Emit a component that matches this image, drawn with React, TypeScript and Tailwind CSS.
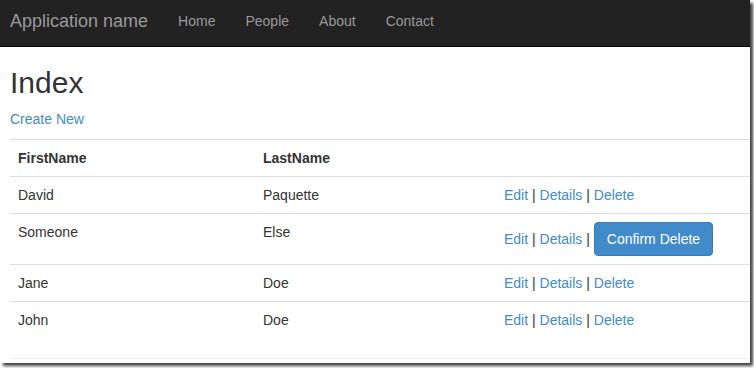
import React from "react";

const rows = [
  { first: "David", last: "Paquette", confirm: false },
  { first: "Someone", last: "Else", confirm: true },
  { first: "Jane", last: "Doe", confirm: false },
  { first: "John", last: "Doe", confirm: false },
];

function Actions({ confirm }: { confirm: boolean }) {
  return (
    <span>
      <a className="text-[#428bca]">Edit</a> | <a className="text-[#428bca]">Details</a> |{" "}
      {confirm ? (
        <button className="inline-block rounded-[4px] border border-[#357ebd] bg-[#428bca] px-[12px] py-[6px] text-[14px] leading-[20px] text-white">
          Confirm Delete
        </button>
      ) : (
        <a className="text-[#428bca]">Delete</a>
      )}
    </span>
  );
}

export default function App() {
  return (
    <div
      className="relative h-[368px] w-[754px] overflow-hidden bg-white text-[14px] leading-[20px] text-[#333]"
      style={{ fontFamily: '"Liberation Sans", Arial, sans-serif' }}
    >
      <div className="h-[363px] w-[750px] overflow-hidden bg-white shadow-[3px_3px_3px_rgba(0,0,0,0.75)]">
        <nav className="flex h-[47px] items-start border-b border-[#080808] bg-[#222]">
          <span className="pl-[10px] pr-[15px] pt-[11px] text-[18px] leading-[20px] text-[#999]">
            Application name
          </span>
          <ul className="flex pt-[11px] text-[14px] leading-[20px] text-[#999]">
            <li className="px-[15px]">Home</li>
            <li className="px-[15px]">People</li>
            <li className="px-[15px]">About</li>
            <li className="px-[15px]">Contact</li>
          </ul>
        </nav>
        <div className="pl-[10px]">
          <h2 className="mt-[19px] mb-[10px] text-[30px] font-normal leading-[33px]">Index</h2>
          <p className="mb-[10px]">
            <a className="text-[#428bca]">Create New</a>
          </p>
          <table className="w-[740px] border-collapse">
            <tbody>
              <tr className="border-t border-[#ddd]">
                <th className="w-[245px] p-[8px] text-left font-bold">FirstName</th>
                <th className="w-[241px] p-[8px] text-left font-bold">LastName</th>
                <th className="p-[8px]"></th>
              </tr>
              {rows.map((r) => (
                <tr key={r.first} className="border-t border-[#ddd]">
                  <td className="p-[8px] align-top">{r.first}</td>
                  <td className="p-[8px] align-top">{r.last}</td>
                  <td className="p-[8px] align-top">
                    <Actions confirm={r.confirm} />
                  </td>
                </tr>
              ))}
            </tbody>
          </table>
          <hr className="mt-[20px] w-[740px] border-t border-[#eee]" />
        </div>
      </div>
    </div>
  );
}
